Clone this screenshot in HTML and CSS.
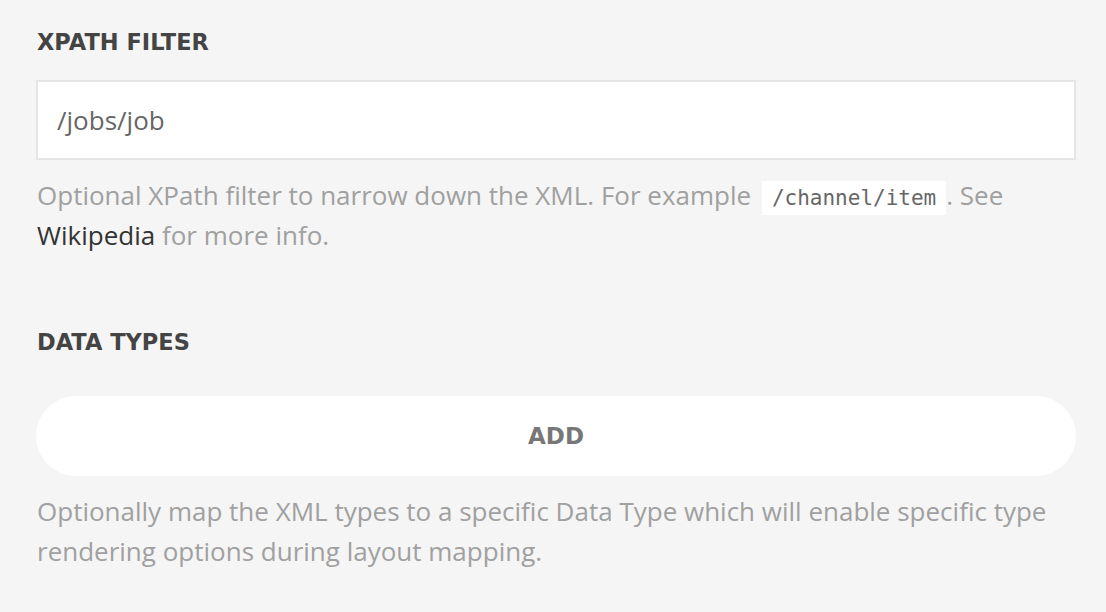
FILE: index.html
```html
<!DOCTYPE html>
<html>
<head>
<meta charset="utf-8">
<link rel="stylesheet" href="styles.css">
</head>
<body>
<div class="page">
  <section class="field">
    <h2 class="label">XPATH FILTER</h2>
    <div class="input">/jobs/job</div>
    <p class="help">Optional XPath filter to narrow down the XML. For example <code class="code">/channel/item</code>. See <a class="link">Wikipedia</a> for more info.</p>
  </section>
  <section class="field">
    <h2 class="label label-spaced">DATA TYPES</h2>
    <div class="button">ADD</div>
    <p class="help">Optionally map the XML types to a specific Data Type which will enable specific type rendering options during layout mapping.</p>
  </section>
</div>
</body>
</html>
```

FILE: styles.css
```css
html, body {
  margin: 0;
  padding: 0;
  background: #f5f5f5;
}
.page {
  padding: 29px 30px 0 36px;
  display: flex;
  flex-direction: column;
  gap: 74px;
}
.field {
  display: flex;
  flex-direction: column;
}
.label {
  margin: 0 0 25px 1px;
  font-family: "DejaVu Sans", sans-serif;
  font-weight: bold;
  font-size: 22.5px;
  line-height: 26px;
  color: #444;
}
.label-spaced {
  margin-bottom: 41px;
}
.input {
  height: 76px;
  border: 2px solid #e6e6e6;
  background: #fff;
  box-sizing: content-box;
  padding: 0 19px;
  display: flex;
  align-items: center;
  font-family: "Open Sans", sans-serif;
  font-size: 26px;
  color: #666;
}
.help {
  margin: 15px 0 0 1px;
  font-family: "Open Sans", sans-serif;
  font-size: 26px;
  line-height: 40px;
  color: #a0a0a0;
}
.code {
  font-family: "DejaVu Sans Mono", monospace;
  font-size: 21px;
  line-height: 1;
  color: #666;
  background: #fff;
  padding: 5px 10px;
  margin-left: 4px;
}
.link {
  color: #333;
}
.button {
  height: 80px;
  border-radius: 40px;
  background: #fff;
  display: flex;
  align-items: center;
  justify-content: center;
  font-family: "DejaVu Sans", sans-serif;
  font-weight: bold;
  font-size: 23px;
  color: #777;
}
```
